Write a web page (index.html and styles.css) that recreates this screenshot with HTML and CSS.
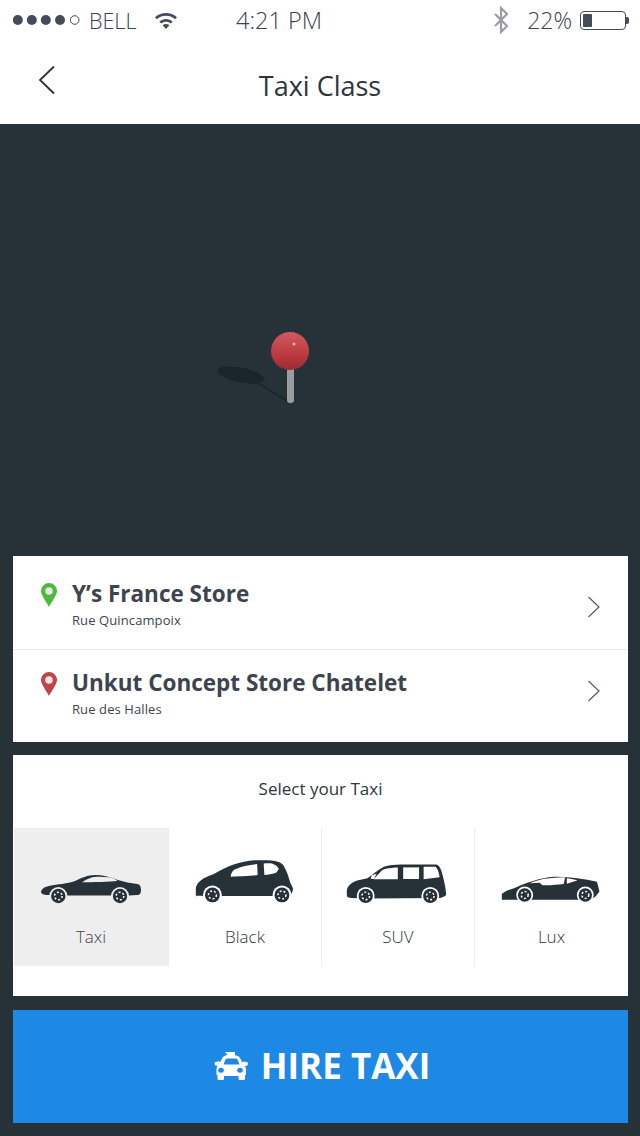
FILE: index.html
```html
<!DOCTYPE html>
<html lang="en">
<head>
<meta charset="utf-8">
<title>Taxi Class</title>
<link rel="stylesheet" href="styles.css">
</head>
<body>
<div class="screen">
  <header class="top">
    <div class="status">
      <div class="status-left">
        <svg class="signal" viewBox="13 10 68 20"><circle cx="17.8" cy="20" r="5"/><circle cx="31.800" cy="20" r="5"/><circle cx="45.800" cy="20" r="5"/><circle cx="60" cy="20" r="5"/><circle class="hollow" cx="74.700" cy="20" r="4.300"/></svg>
        <span class="carrier">BELL</span>
        <svg class="wifi" viewBox="0 0 24 18"><path d="M1 6.200C7.500.6 16.500.6 23 6.200l-1.800 2C15.800 3.700 8.200 3.700 2.800 8.200z"/><path d="M5.300 10.500c4-3.400 9.400-3.400 13.400 0l-1.900 2c-2.900-2.300-6.700-2.300-9.600 0z"/><path d="M8.600 14.200c2-1.500 4.800-1.500 6.800 0L12 18z"/></svg>
      </div>
      <span class="time">4:21 PM</span>
      <div class="status-right">
        <svg class="bt" viewBox="0 0 16 28"><path d="M2 8l12 12-6 6V2l6 6L2 20" fill="none" stroke="#9a9ea3" stroke-width="2.200"/></svg>
        <span class="pct">22%</span>
        <div class="battery"><div class="battery-fill"></div></div>
        <div class="battery-nub"></div>
      </div>
    </div>
    <nav class="nav">
      <svg class="back" viewBox="0 0 18 30"><path d="M16 1.500L2 15l14 13.500" fill="none" stroke="#263238" stroke-width="1.800"/></svg>
      <h1 class="title">Taxi Class</h1>
    </nav>
  </header>

  <section class="map">
    <svg class="map-art" viewBox="0 124 640 432">
      <defs>
        <linearGradient id="ball" x1="0" y1="0" x2="0" y2="1"><stop offset="0" stop-color="#d2595e"/><stop offset=".6" stop-color="#bb3a3f"/><stop offset="1" stop-color="#982c30"/></linearGradient>
      </defs>
      <ellipse cx="241" cy="375" rx="24" ry="7.500" fill="#1b262c" transform="rotate(11 241 375)"/>
      <path d="M258 383l29 18" stroke="#1b262c" stroke-width="2"/>
      <rect x="287" y="365" width="7" height="38" rx="3" fill="#9a9c9e"/>
      <circle cx="290" cy="351" r="19" fill="url(#ball)"/>
      <circle cx="294" cy="344" r="1.500" fill="#e5b0b2"/>
    </svg>
  </section>

  <section class="card stops">
    <a class="stop">
      <svg class="stop-pin" viewBox="0 0 16 24"><path d="M8 0a8 8 0 0 1 8 8.300c0 3.700-5.600 11-8 15.700C5.600 19.300 0 12 0 8.300A8 8 0 0 1 8 0z" fill="#4fb83f"/><circle cx="8" cy="8" r="3.800" fill="#e6e6e6"/></svg>
      <div class="stop-text">
        <div class="stop-name">Y’s France Store</div>
        <div class="stop-addr">Rue Quincampoix</div>
      </div>
      <svg class="chev" viewBox="0 0 14 24"><path d="M1.500 2l10.500 10L1.500 22" fill="none" stroke="#555c66" stroke-width="1.200"/></svg>
    </a>
    <a class="stop">
      <svg class="stop-pin" viewBox="0 0 16 24"><path d="M8 0a8 8 0 0 1 8 8.300c0 3.700-5.600 11-8 15.700C5.600 19.300 0 12 0 8.300A8 8 0 0 1 8 0z" fill="#c24444"/><circle cx="8" cy="8" r="3.800" fill="#e6e6e6"/></svg>
      <div class="stop-text">
        <div class="stop-name">Unkut Concept Store Chatelet</div>
        <div class="stop-addr">Rue des Halles</div>
      </div>
      <svg class="chev" viewBox="0 0 14 24"><path d="M1.500 2l10.500 10L1.500 22" fill="none" stroke="#555c66" stroke-width="1.200"/></svg>
    </a>
  </section>

  <section class="card picker">
    <h2 class="picker-title">Select your Taxi</h2>
    <div class="classes">
      <div class="class selected">
        <svg class="car" viewBox="14 850 154 60">
          <path class="body" d="M41 893c0-4 3-6 8-7 9-2 18-2 26-5 6-3 13-6 20-6 8 0 16 2 23 5 6 2 13 3 19 4 3 0 4 3 4 6 0 3-1 5-4 5l-8 .5H65l-17-.5c-4 0-7-1-7-3z"/>
          <path class="glass-s" d="M81.700 882.300c4-2.500 9-5.500 15-5.600 5 0 10 .5 13.300.6 3 .8 6 2 7.300 3.700-8 .8-24 1.300-35.600 1.300z"/>
          <g class="wheel"><circle class="ring" cx="58.300" cy="896" r="9"/><circle class="tire" cx="58.300" cy="896" r="7.200"/><circle class="spokes" cx="58.300" cy="896" r="3.800"/></g>
          <g class="wheel"><circle class="ring" cx="120" cy="896" r="9"/><circle class="tire" cx="120" cy="896" r="7.200"/><circle class="spokes" cx="120" cy="896" r="3.800"/></g>
        </svg>
        <span class="class-name dim">Taxi</span>
      </div>
      <div class="class">
        <svg class="car" viewBox="168 850 153 60">
          <path class="body" d="M195 897.300v-8c0-4 3-8 8-11 4-2 7-3 10-4.300 7-3.500 13-7 20-9.500 7-2.500 14-3.800 21-4.300 6-.3 14-.3 19.300.3 5 .8 8.700 2.500 10 5 3 5 5 11 6.700 17l2.700 5.500c.5 3-1.200 5.500-2.700 7.300-5 1-70 1-94.700.5z"/>
          <path class="glass" d="M230 876.700c.5-3 1.500-5 3.300-6.700 5-2.800 13-5 23.400-6l.6 11c-7 .8-20 1.300-27.300 1.700z"/>
          <path class="glass" d="M263.300 863.300c3-.3 6.500-.3 8.400 0 3 1 5.300 2.700 6.600 5-.5 2-1.600 3.700-3.300 4.700-3 1-7.500 1.600-11 2z"/>
          <g class="wheel"><circle class="ring" cx="211.700" cy="895" r="9.500"/><circle class="tire" cx="211.700" cy="895" r="7.500"/><circle class="spokes" cx="211.700" cy="895" r="4"/></g>
          <g class="wheel"><circle class="ring" cx="281.700" cy="895" r="9.500"/><circle class="tire" cx="281.700" cy="895" r="7.500"/><circle class="spokes" cx="281.700" cy="895" r="4"/></g>
        </svg>
        <span class="class-name">Black</span>
      </div>
      <div class="class">
        <svg class="car" viewBox="321 850 153 60">
          <path class="body" d="M346 895v-5c.5-3 3-6 7.300-8.300 4-1.700 9-2.500 13.400-3.400 5-3.300 10-8 16.600-11.600 5-1.700 11-2.100 17-2.200h35.400c3 .5 5 3.500 6.600 10.500 1.700 6 3 12 3.700 19.500-.5 2-3 2.500-6 3.500l-75 .7-14-.7c-3.500 0-5-1-5-2.500z"/>
          <path class="glass" d="M373 879.300l8.700-9.300c3-1.700 10-2.700 15.600-2.700v12z"/>
          <path class="glass" d="M402.700 867.300h16v11.700h-16z"/>
          <path class="glass" d="M423.300 866.700h11.700c1.500 0 4 6 4.300 10.600l-16 2z"/>
          <path class="glass" d="M373.300 879l-3.300-.3 1-3.400 5-1.500z"/>
          <g class="wheel"><circle class="ring" cx="365" cy="896" r="9"/><circle class="tire" cx="365" cy="896" r="7.200"/><circle class="spokes" cx="365" cy="896" r="3.800"/></g>
          <g class="wheel"><circle class="ring" cx="430" cy="896" r="9"/><circle class="tire" cx="430" cy="896" r="7.200"/><circle class="spokes" cx="430" cy="896" r="3.800"/></g>
        </svg>
        <span class="class-name">SUV</span>
      </div>
      <div class="class">
        <svg class="car" viewBox="474 850 154 60">
          <path class="body" d="M501 900V894c4-3 8-4.500 12.300-5.700 7-3 13-6 20-7.600 6-2 13-3.600 20-4 8-.3 16 .6 23.400 1.600 7 1 14 2 20 3.400l2.600 10-4 5-5 3.300-75-.2z"/>
          <path class="glass" d="M529.300 883.300c4-2 11-4 14.700-4.600 7-.6 13-1.300 20.700-1.400l-1.400 6.700c-6 .6-12 1.300-18.300 1.300h-3l-3-2.500z"/>
          <path class="glass" d="M566.400 878.300c4.500.6 8.500 1.300 10.600 2.300l-10.600 3.300z"/>
          <g class="wheel"><circle class="ring" cx="524" cy="895" r="8.500"/><circle class="tire" cx="524" cy="895" r="6.800"/><circle class="spokes" cx="524" cy="895" r="3.500"/></g>
          <g class="wheel"><circle class="ring" cx="585" cy="895" r="8.500"/><circle class="tire" cx="585" cy="895" r="6.800"/><circle class="spokes" cx="585" cy="895" r="3.500"/></g>
        </svg>
        <span class="class-name">Lux</span>
      </div>
    </div>
  </section>

  <button class="hire" type="button">
    <svg class="hire-icon" viewBox="0 0 35 28"><path fill="#fff" d="M12 0h10v3.300c3 .4 4.800 1.700 5.700 3.900l1.600 3.300 1-1 3.900.8c.6.1.8.6.7 1.200l-.3 1.500c-.1.500-.4.800-.9.800l-1.700.3c.7 1.300 1 2.500 1 4V23h-1v3.500c0 1-.6 1.500-1.500 1.500h-3.500c-1 0-1.500-.6-1.500-1.500V24H11v2.500c0 1-.6 1.500-1.500 1.500H6c-1 0-1.500-.6-1.500-1.500V23h-1v-5.200c0-1.500.3-2.700 1-4l-1.700-.3c-.5 0-.8-.3-.9-.8l-.3-1.500c-.1-.6.1-1.100.7-1.200l3.900-.8 1 1 1.600-3.300c.9-2.200 2.700-3.500 5.700-3.900z"/><path fill="#1e88e5" d="M12.500 6.500h10c1.200 0 1.900.5 2.300 1.500l1.700 4.500h-16l1.700-4.500c.4-1 1.100-1.500 2.300-1.500z"/><ellipse cx="8" cy="18.200" rx="2.800" ry="2.500" fill="#1e88e5"/><ellipse cx="27" cy="18.200" rx="2.800" ry="2.500" fill="#1e88e5"/></svg>
    <span class="hire-label">HIRE TAXI</span>
  </button>
</div>
</body>
</html>
```
FILE: styles.css
```css
* { box-sizing: border-box; }
html, body { margin: 0; padding: 0; }
body {
  width: 640px;
  height: 1136px;
  overflow: hidden;
  background: #263238;
  font-family: "Open Sans", "Noto Sans", sans-serif;
  color: #3d4450;
}
.screen { display: flex; flex-direction: column; height: 1136px; }

.top { background: #fff; height: 124px; }
.status {
  height: 40px;
  position: relative;
  display: flex;
  justify-content: space-between;
  align-items: center;
  padding: 0 11px 0 13px;
  color: #3a4150;
}
.status-left, .status-right { display: flex; align-items: center; }
.signal { width: 68px; height: 20px; fill: #454c59; }
.signal .hollow { fill: none; stroke: #454c59; stroke-width: 1; }
.carrier { margin-left: 8px; font-size: 21.500px; font-weight: 300; }
.wifi { width: 24px; height: 18px; margin-left: 18px; fill: #454c59; }
.time {
  position: absolute;
  left: 236px;
  font-size: 23.500px;
  font-weight: 300;
}
.bt { width: 16px; height: 28px; }
.pct { margin-left: 18px; font-size: 23px; font-weight: 300; }
.battery {
  width: 46px;
  height: 19px;
  margin-left: 8px;
  padding: 2px;
  border: 1px solid #454c59;
  border-radius: 4px;
}
.battery-fill { width: 9px; height: 100%; background: #454c59; border-radius: 1px; }
.battery-nub { width: 3px; height: 7px; background: #454c59; border-radius: 0 2px 2px 0; }

.nav {
  position: relative;
  height: 84px;
  display: flex;
  align-items: center;
  justify-content: center;
}
.back { position: absolute; left: 38px; top: 25px; width: 18px; height: 30px; }
.title { margin: 0 0 2px; padding-top: 10px; font-size: 27px; font-weight: 400; color: #2b3640; line-height: 36px; }

.map { height: 432px; }
.map-art { display: block; width: 640px; height: 432px; }

.card { margin: 0 12px 0 13px; background: #fff; }
.stops { height: 186px; display: flex; flex-direction: column; }
.stop {
  height: 93px;
  display: flex;
  align-items: flex-start;
  padding: 22px 27px 0 28px;
}
.stop + .stop { border-top: 1px solid #ececec; padding-top: 17px; }
.stop-pin { width: 16px; height: 24px; flex: none; margin-top: 5px; }
.stop-text { flex: 1; margin-left: 15px; }
.stop-name { font-size: 22.500px; font-weight: 700; line-height: 32px; color: #3d4450; }
.stop-addr { margin-top: 1px; font-size: 13px; letter-spacing: .1px; line-height: 18px; color: #3d4450; }
.chev { width: 14px; height: 24px; flex: none; margin-top: 17px; }
.stop + .stop .chev { margin-top: 12px; }

.picker { margin-top: 13px; height: 241px; }
.picker-title {
  margin: 0;
  height: 73px;
  padding-top: 20px;
  text-align: center;
  font-size: 17px;
  font-weight: 400;
  line-height: 28px;
  color: #2b3640;
}
.classes { display: grid; grid-template-columns: 155px 153px 153px 154px; height: 138px; }
.class {
  display: flex;
  flex-direction: column;
  align-items: center;
  border-left: 1px solid #ececec;
}
.class:first-child { border-left: 1px solid #fff; }
.class.selected { background: #eee; }
.car { display: block; width: 100%; height: 60px; margin-top: 22px; }
.body { fill: #263238; }
.glass { fill: #fff; }
.glass-s { fill: #eee; }
.ring { fill: #fff; }
.selected .ring { fill: #eee; }
.tire { fill: #263238; }
.spokes { fill: none; stroke: #fff; stroke-width: 1.500; stroke-dasharray: 2 2; }
.class-name { margin-top: 15px; font-size: 17px; line-height: 24px; font-weight: 300; color: #2b3640; }
.class-name.dim { color: #3d4450; }

.hire {
  margin: 14px 12px 0 13px;
  height: 113px;
  padding: 0 0 2px 2px;
  border: 0;
  background: #1e88e5;
  color: #fff;
  font-family: inherit;
  font-size: 35px;
  font-weight: 700;
  display: flex;
  align-items: center;
  justify-content: center;
  gap: 13px;
}
.hire-icon { width: 35px; height: 28px; flex: none; }
```
